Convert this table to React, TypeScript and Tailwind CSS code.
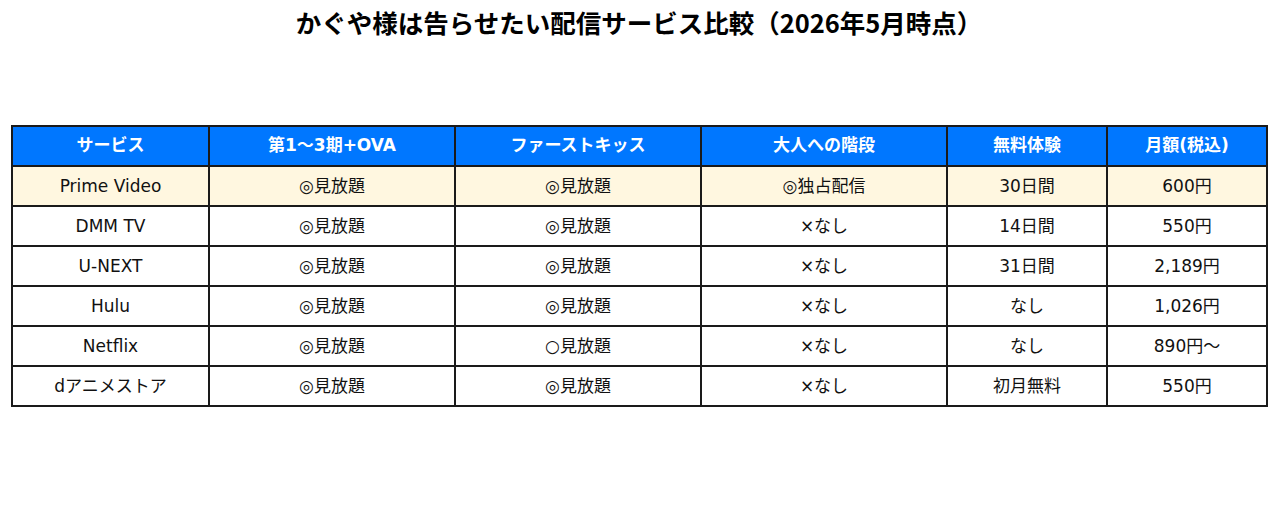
import React from "react";

const headers = ["サービス", "第1〜3期+OVA", "ファーストキッス", "大人への階段", "無料体験", "月額(税込)"];
const widths = ["w-[197px]", "w-[246px]", "w-[246px]", "w-[246px]", "w-[160px]", "w-[160px]"];
const rows = [
  ["Prime Video", "◎見放題", "◎見放題", "◎独占配信", "30日間", "600円"],
  ["DMM TV", "◎見放題", "◎見放題", "×なし", "14日間", "550円"],
  ["U-NEXT", "◎見放題", "◎見放題", "×なし", "31日間", "2,189円"],
  ["Hulu", "◎見放題", "◎見放題", "×なし", "なし", "1,026円"],
  ["Netflix", "◎見放題", "○見放題", "×なし", "なし", "890円〜"],
  ["dアニメストア", "◎見放題", "◎見放題", "×なし", "初月無料", "550円"],
];

export default function App() {
  return (
    <div className="w-[1278px] h-[532px] bg-white font-['DejaVu_Sans','Noto_Sans_CJK_JP',sans-serif] text-[#111]">
      <h1 className="pt-[5px] h-[125px] text-center text-[25.5px] leading-[34px] font-bold font-['Noto_Sans_CJK_JP',sans-serif] text-black">
        かぐや様は告らせたい配信サービス比較（2026年5月時点）
      </h1>
      <table className="ml-[11px] border-collapse w-[1257px] table-fixed">
        <thead>
          <tr className="h-[40px] bg-[#0077ff] text-white">
            {headers.map((h, i) => (
              <th key={i} className={`${widths[i]} border-2 border-[#1a1a1a] text-[17px] font-bold font-['DejaVu_Sans','Noto_Sans_CJK_JP',sans-serif]`}>
                {h}
              </th>
            ))}
          </tr>
        </thead>
        <tbody>
          {rows.map((r, ri) => (
            <tr key={ri} className={ri === 0 ? "h-[40px] bg-[#fff7e0]" : "h-[40px] bg-white"}>
              {r.map((c, ci) => (
                <td key={ci} className="border-2 border-[#1a1a1a] text-center text-[17px] leading-[20px]">
                  {c}
                </td>
              ))}
            </tr>
          ))}
        </tbody>
      </table>
    </div>
  );
}
